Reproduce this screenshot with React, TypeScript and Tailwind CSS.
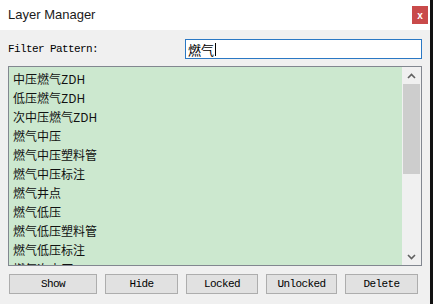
const layers = [
  '中压燃气ZDH',
  '低压燃气ZDH',
  '次中压燃气ZDH',
  '燃气中压',
  '燃气中压塑料管',
  '燃气中压标注',
  '燃气井点',
  '燃气低压',
  '燃气低压塑料管',
  '燃气低压标注',
  '燃气次中压',
];

const buttons = [
  { label: 'Show', w: 'w-[88px]' },
  { label: 'Hide', w: 'w-[73px]' },
  { label: 'Locked', w: 'w-[72px]' },
  { label: 'Unlocked', w: 'w-[71px]' },
  { label: 'Delete', w: 'w-[73px]' },
];

const mono = "font-['Liberation_Mono',monospace] text-[11px] tracking-[-0.6px]";

function Chevron({ up }: { up?: boolean }) {
  return (
    <svg width="9" height="6" viewBox="0 0 9 6" className={up ? '' : 'rotate-180'}>
      <path d="M1 5 L4.5 1.5 L8 5" fill="none" stroke="#606060" strokeWidth="1.6" />
    </svg>
  );
}

export default function App() {
  return (
    <div className="flex h-[304px] w-[433px] overflow-hidden bg-[#f0f0f0]">
      <div className="flex w-[430px] flex-col">
        {/* Title bar */}
        <div className="flex h-[30px] items-center justify-between bg-white pl-2 pr-[2px]">
          <span className="font-['Liberation_Sans',sans-serif] text-[13px] text-[#1a1a1a]">Layer Manager</span>
          <div className="flex h-[18px] w-[16px] items-center justify-center bg-[#c94a4a] font-['Liberation_Sans',sans-serif] text-[10px] font-bold text-white">
            x
          </div>
        </div>

        <div className="flex flex-col px-2">
          {/* Filter row */}
          <div className="mt-[9px] flex h-[20px] items-center">
            <span className={`w-[177px] text-black ${mono}`}>Filter Pattern:</span>
            <div className="flex h-[20px] w-[237px] items-center border border-[#2a78c4] bg-white px-[2px]">
              <span className="font-['Noto_Sans_CJK_SC',sans-serif] text-[13px] leading-none text-black">燃气</span>
              <span className="ml-[1px] h-[13px] w-[1px] bg-black" />
            </div>
          </div>

          {/* Layer list */}
          <div className="mt-[7px] flex h-[200px] border border-[#828790] bg-[#cce8cf]">
            <div className="flex flex-1 flex-col overflow-hidden pl-[4px] pt-[2px]">
              {layers.map((name) => (
                <div
                  key={name}
                  className="flex h-[19px] shrink-0 items-center font-['Noto_Sans_CJK_SC',sans-serif] text-[12px] text-[#111]"
                >
                  {name}
                </div>
              ))}
            </div>
            <div className="flex w-[19px] flex-col bg-[#f0f0f0]">
              <div className="flex h-[17px] items-center justify-center">
                <Chevron up />
              </div>
              <div className="mx-[1px] h-[90px] bg-[#cdcdcd]" />
              <div className="flex-1" />
              <div className="flex h-[17px] items-center justify-center">
                <Chevron />
              </div>
            </div>
          </div>

          {/* Buttons */}
          <div className="mt-[8px] flex gap-[8px] pl-[1px]">
            {buttons.map((b) => (
              <div
                key={b.label}
                className={`flex h-[20px] items-center justify-center border border-[#adadad] bg-[#e1e1e1] text-black ${b.w} ${mono}`}
              >
                {b.label}
              </div>
            ))}
          </div>
        </div>
      </div>
      <div className="w-[3px] bg-[#111]" />
    </div>
  );
}
